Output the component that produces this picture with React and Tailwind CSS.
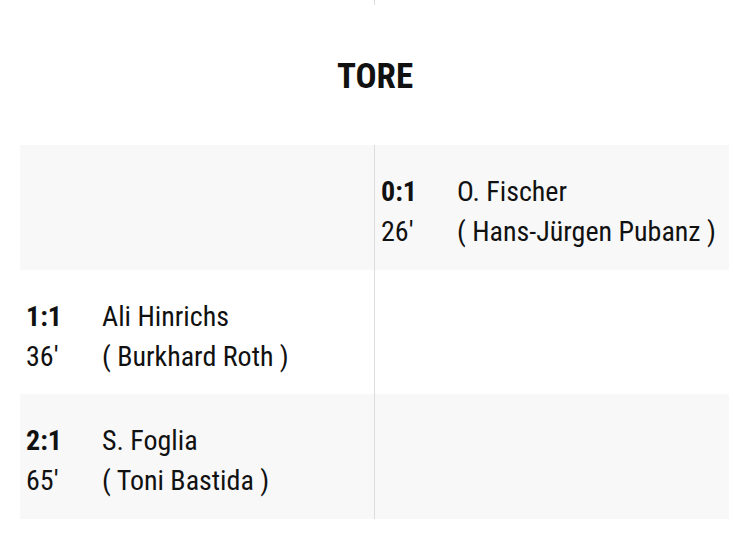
const goals = [
  { side: "right", score: "0:1", minute: "26'", scorer: "O. Fischer", assist: "Hans-Jürgen Pubanz" },
  { side: "left", score: "1:1", minute: "36'", scorer: "Ali Hinrichs", assist: "Burkhard Roth" },
  { side: "left", score: "2:1", minute: "65'", scorer: "S. Foglia", assist: "Toni Bastida" },
];

function GoalCell({ goal }) {
  if (!goal) return null;
  return (
    <div className="flex text-[28px] leading-[40px]">
      <div className="w-[76px] shrink-0">
        <div className="font-bold">{goal.score}</div>
        <div>{goal.minute}</div>
      </div>
      <div className="min-w-0">
        <div>{goal.scorer}</div>
        <div>( {goal.assist} )</div>
      </div>
    </div>
  );
}

export default function App() {
  return (
    <div
      className="w-[734px] h-[554px] bg-white text-[#111] overflow-hidden"
      style={{ fontFamily: '"Roboto Condensed", Roboto, "Liberation Sans", sans-serif' }}
    >
      <div className="flex h-[5px] ml-[374px]">
        <div className="w-px bg-[#dcdcdc]" />
      </div>

      <h2 className="mt-[52px] pl-[16px] text-center text-[35px] leading-[40px] font-bold">TORE</h2>

      <div className="mt-[48px] ml-[20px] w-[709px]">
        {goals.map((goal, i) => (
          <div key={i} className={`flex h-[124.5px] ${i % 2 === 0 ? "bg-[#f8f8f8]" : "bg-white"}`}>
            <div className="w-[354px] pl-[6px] pt-[27px]">
              {goal.side === "left" && <GoalCell goal={goal} />}
            </div>
            <div className="w-px bg-[#dcdcdc]" />
            <div className="flex-1 pl-[6px] pt-[27px]">
              {goal.side === "right" && <GoalCell goal={goal} />}
            </div>
          </div>
        ))}
      </div>
    </div>
  );
}
